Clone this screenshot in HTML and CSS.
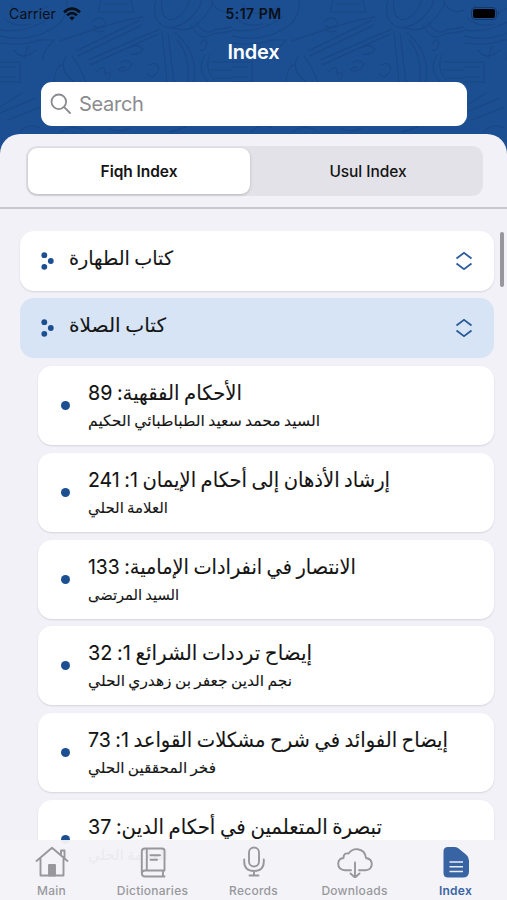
FILE: index.html
```html
<!DOCTYPE html>
<html lang="en">
<head>
<meta charset="utf-8">
<title>Index</title>
<link rel="stylesheet" href="styles.css">
</head>
<body>
<div class="app">
  <header class="header">
    <svg class="pattern" width="507" height="160" aria-hidden="true">
      <defs>
        <pattern id="doodle" width="232" height="160" patternUnits="userSpaceOnUse">
          <g fill="none" stroke="#184788" stroke-width="1.4" stroke-linecap="round" stroke-linejoin="round">
            <path d="M76 51 L140 20 M78 56 L142 25 M88 60 L160 29 M90 65 L158 34 M60 41 Q120 20 143 17"/>
            <path d="M102 -2 L98 12 H134 L130 -2 M105 4 H128"/>
            <path d="M156 0 Q150 22 168 28 Q184 27 195 13 Q204 3 200 -4 M162 0 Q160 18 171 20 Q184 17 190 0 M171 27 Q190 36 204 17 Q214 5 212 0"/>
            <path d="M162 31 L167 82 M168 33 L174 82 M174 32 Q198 50 194 82 M177 40 Q190 55 188 82"/>
            <path d="M191 25 Q200 43 212 34 L232 31 M196 22 Q205 37 214 30 L232 27 M205 55 Q196 70 208 82 M210 55 Q204 68 214 80"/>
            <path d="M0 36 Q34 44 60 23 Q70 10 66 -2 M0 43 Q24 46 40 40 L54 40 Q42 52 43 60 M0 30 Q28 34 52 16 M10 4 Q20 22 48 6"/>
            <path d="M92 22 Q100 14 106 22 Q102 30 94 26 Q92 34 104 31"/>
            <path d="M66 56 Q58 70 74 82 M72 56 Q80 66 86 82 M54 82 Q56 62 64 66 M96 72 Q106 62 105 74 Q114 70 108 80"/>
            <path d="M120 63 Q128 58 132 64 Q128 72 120 71 Q116 68 125 67 M129 48 Q138 43 143 49 Q138 56 131 54 M149 65 Q160 60 158 72 Q152 80 147 74 M200 44 Q206 36 207 44 Q205 52 200 50"/>
            <path d="M0 62 H20 V82 H0 M0 67 H16 M0 77 H16 M0 107 L22 93 M0 113 L36 98 M8 120 L40 107 M20 132 Q28 122 40 128"/>
            <path d="M212 62 H232 M212 70 H232 M215 78 H232 M216 105 L232 98 M212 116 L232 108 M60 132 Q72 124 84 130 M108 128 Q118 134 130 128 M170 132 L186 127"/>
            <path d="M212 2 Q220 16 232 10 M4 18 Q14 28 30 24 M28 46 L24 58 M14 50 Q22 62 36 50"/>
          </g>
        </pattern>
      </defs>
      <rect width="507" height="160" fill="url(#doodle)"/>
    </svg>
    <div class="status">
      <div class="carrier"><span>Carrier</span>
        <svg width="18" height="14" viewBox="0 0 18 14" fill="none" stroke="#0a0f18" stroke-width="2.6"><path d="M1 5.2 Q9 -2 17 5.2"/><path d="M4 8.3 Q9 4 14 8.3"/><path d="M6.2 10.6 Q9 8.2 11.8 10.6 L9 13.6Z" fill="#0a0f18" stroke="none"/></svg>
      </div>
      <div class="clock">5:17 PM</div>
      <svg class="battery" width="30" height="13" viewBox="0 0 30 13"><rect x=".5" y=".5" width="25" height="12" rx="3.5" fill="none" stroke="#143a6d"/><rect x="2" y="2" width="22" height="9" rx="2" fill="#000"/><path d="M27 4.5 Q29 6.5 27 8.5Z" fill="#143a6d"/></svg>
    </div>
    <h1 class="title">Index</h1>
    <div class="search">
      <svg width="22" height="22" viewBox="0 0 22 22" fill="none" stroke="#8b8b8f" stroke-width="1.8" stroke-linecap="round"><circle cx="8.8" cy="8.8" r="7.3"/><path d="M14.2 14.2 L20 20"/></svg>
      <span>Search</span>
    </div>
  </header>
  <main class="panel">
    <div class="segbar"><div class="seg"><div class="seg-item on">Fiqh Index</div><div class="seg-item">Usul Index</div></div></div>
    <div class="list">
      <div class="group">
        <svg class="dots" width="14" height="18" viewBox="0 0 14 18" fill="#1b4f91"><circle cx="4.3" cy="3.2" r="2.9"/><circle cx="10.8" cy="9" r="2.9"/><circle cx="4.3" cy="14.8" r="2.9"/></svg>
        <span class="group-name" dir="rtl" data-width="104">كتاب الطهارة</span>
        <svg class="chev" width="18" height="20" viewBox="0 0 18 20" fill="none" stroke="#2b5b99" stroke-width="1.8"><path d="M1.5 7.5 L9 1.8 L16.5 7.5 M1.5 12.5 L9 18.2 L16.5 12.5"/></svg>
      </div>
      <div class="group open">
        <svg class="dots" width="14" height="18" viewBox="0 0 14 18" fill="#1b4f91"><circle cx="4.3" cy="3.2" r="2.9"/><circle cx="10.8" cy="9" r="2.9"/><circle cx="4.3" cy="14.8" r="2.9"/></svg>
        <span class="group-name" dir="rtl" data-width="97">كتاب الصلاة</span>
        <svg class="chev" width="18" height="20" viewBox="0 0 18 20" fill="none" stroke="#2b5b99" stroke-width="1.8"><path d="M1.5 7.5 L9 1.8 L16.5 7.5 M1.5 12.5 L9 18.2 L16.5 12.5"/></svg>
      </div>
      <div class="books">
        <div class="book"><i></i><div class="text"><div class="name" dir="rtl" data-width="154">الأحكام الفقهية: 89</div><div class="author" dir="rtl" data-width="232">السيد محمد سعيد الطباطبائي الحكيم</div></div></div>
        <div class="book"><i></i><div class="text"><div class="name" dir="rtl" data-width="302">إرشاد الأذهان إلى أحكام الإيمان 1: 241</div><div class="author" dir="rtl" data-width="80">العلامة الحلي</div></div></div>
        <div class="book"><i></i><div class="text"><div class="name" dir="rtl" data-width="268">الانتصار في انفرادات الإمامية: 133</div><div class="author" dir="rtl" data-width="91">السيد المرتضى</div></div></div>
        <div class="book"><i></i><div class="text"><div class="name" dir="rtl" data-width="224">إيضاح ترددات الشرائع 1: 32</div><div class="author" dir="rtl" data-width="204">نجم الدين جعفر بن زهدري الحلي</div></div></div>
        <div class="book"><i></i><div class="text"><div class="name" dir="rtl" data-width="360">إيضاح الفوائد في شرح مشكلات القواعد 1: 73</div><div class="author" dir="rtl" data-width="128">فخر المحققين الحلي</div></div></div>
        <div class="book"><i></i><div class="text"><div class="name" dir="rtl" data-width="294">تبصرة المتعلمين في أحكام الدين: 37</div><div class="author" dir="rtl" data-width="80">العلامة الحلي</div></div></div>
      </div>
    </div>
    <div class="scroll"></div>
  </main>
  <nav class="tabs">
    <div class="tab"><svg width="34" height="32" viewBox="0 0 34 32" fill="none" stroke="#98989c" stroke-width="1.9" stroke-linecap="round" stroke-linejoin="round"><path d="M1.5 15 L17 1.8 L32.5 15 M5.5 12.5 V29.5 H28.5 V12.5 M26 9 V4.5 H29.5 V12"/><path d="M14 29.5 V19 H20 V29.5Z" fill="#98989c"/></svg><span>Main</span></div>
    <div class="tab"><svg width="34" height="32" viewBox="0 0 34 32" fill="none" stroke="#98989c" stroke-width="1.9" stroke-linecap="round" stroke-linejoin="round"><path d="M28.5 24.5 V5 Q28.5 2.5 26 2.5 H9 Q5.8 2.5 5.8 5.5 V27 Q5.8 30.5 9 30.5 H28.5 M28.5 24.5 H9 Q6 24.5 5.8 27.5 M27 25 V30 M10.8 3 V24 M14.5 9.2 H24 M14.5 13.8 H21"/></svg><span>Dictionaries</span></div>
    <div class="tab"><svg width="34" height="32" viewBox="0 0 34 32" fill="none" stroke="#98989c" stroke-width="1.9" stroke-linecap="round"><rect x="12" y="1.5" width="10" height="19" rx="5"/><path d="M7.2 13.5 V15.5 Q7.2 25 17 25 Q26.8 25 26.8 15.5 V13.5 M17 25 V29.5 M12.5 29.5 H21.5"/></svg><span>Records</span></div>
    <div class="tab"><svg width="36" height="32" viewBox="0 0 36 32" fill="none" stroke="#98989c" stroke-width="1.9" stroke-linecap="round" stroke-linejoin="round"><path d="M14 24.2 H7.5 Q1.2 23.5 1.2 17.5 Q1.5 12.5 6.5 12 Q6.5 6.5 11.5 7.5 Q15 2.8 20.5 3.2 Q28 4 29 12 Q34.8 13 34.8 18 Q34.5 24 28.5 24.2 H22 M18 16.5 V31 M13.5 27.5 L18 31.5 L22.5 27.5"/></svg><span>Downloads</span></div>
    <div class="tab active"><svg width="34" height="32" viewBox="0 0 34 32"><path d="M9 1 H16 Q18 1 20 2.7 L27.5 9 Q30 11.2 30 14.5 V25.5 Q30 31.5 24 31.5 H9 Q4.5 31.5 4.5 27 V5.5 Q4.5 1 9 1Z" fill="#3864a3"/><path d="M10.5 16 H24 M10.5 20.7 H24 M10.5 25.4 H24" stroke="#e8eef8" stroke-width="1.5"/></svg><span>Index</span></div>
  </nav>
</div>
<script src="fit.js"></script>
</body>
</html>
```
FILE: fit.js
```js
document.querySelectorAll('[data-width]').forEach(function (el) {
  var natural = el.getBoundingClientRect().width;
  el.style.transform = 'scaleX(' + (el.dataset.width / natural).toFixed(4) + ')';
});
```
FILE: styles.css
```css
* { box-sizing: border-box; }
body { margin: 0; font-family: Inter, "DejaVu Sans", sans-serif; color: #141414; }
.app { position: relative; width: 507px; height: 900px; overflow: hidden; background: #1c4f91; display: flex; flex-direction: column; }
.header { position: relative; height: 134px; flex: none; }
.pattern { position: absolute; left: 0; top: 0; }
.status { position: relative; height: 27px; display: grid; grid-template-columns: 1fr auto 1fr; align-items: center; padding: 0 6px 0 9px; font-size: 14px; color: #0a0f18; }
.carrier { display: flex; align-items: center; gap: 7px; letter-spacing: .15px; }
.clock { font-weight: 600; font-size: 14px; letter-spacing: .5px; margin-right: 3px; }
.battery { justify-self: end; }
.title { position: relative; margin: 12px 0 0; text-align: center; font-size: 20px; line-height: 26px; font-weight: 600; color: #fff; letter-spacing: -.2px; }
.search { position: relative; margin: 17px 40px 0 41px; height: 44px; border-radius: 11px; background: #fff; display: flex; align-items: center; gap: 7px; padding-left: 9px; font-size: 20px; letter-spacing: -.3px; color: #8b8b8f; }
.panel { position: relative; flex: 1; background: #f2f1f8; border-radius: 20px 20px 0 0; overflow: hidden; }
.segbar { height: 75px; padding: 12px 24px 0 26px; border-bottom: 2px solid #c9c8ce; }
.seg { height: 50px; border-radius: 11px; background: #e3e2e8; display: grid; grid-template-columns: 226px 1fr; padding: 2px; }
.seg-item { display: flex; align-items: center; justify-content: center; font-size: 15.5px; font-weight: 500; letter-spacing: -.05px; padding-left: 1px; }
.seg-item.on { margin-right: 4px; padding-left: 0; background: #fff; border-radius: 9px; font-weight: 600; box-shadow: 0 1px 3px rgba(0,0,0,.2); }
.list { padding: 22px 13px 0 20px; display: flex; flex-direction: column; gap: 7.5px; }
.group { height: 60px; border-radius: 14px; background: #fff; box-shadow: 0 1px 2px rgba(0,0,0,.12); display: flex; align-items: center; padding: 0 21px 0 20px; }
.group.open { margin-top: -.5px; background: #d7e4f6; box-shadow: none; }
.group-name { margin: -6px auto 0 15px; font-size: 19.5px; }
.group-name, .name, .author { transform-origin: left center; word-spacing: -1px; -webkit-text-stroke: .1px; }
.books { margin: .5px 0 0 18px; display: flex; flex-direction: column; gap: 7.8px; }
.book { height: 79px; border-radius: 14px; background: #fff; box-shadow: 0 1px 2px rgba(0,0,0,.12); display: flex; align-items: center; padding-left: 23px; }
.book i { width: 9px; height: 9px; border-radius: 50%; background: #1b4f91; }
.text { margin-left: 18px; display: flex; flex-direction: column; align-items: flex-start; white-space: nowrap; }
.name { font-size: 20.5px; line-height: 30px; }
.author { font-size: 15px; line-height: 25px; }
.scroll { position: absolute; right: 3px; top: 98px; width: 4px; height: 55px; border-radius: 2px; background: #98979d; }
.tabs { position: absolute; left: 0; right: 0; bottom: 0; height: 60px; background: rgba(243,242,248,.96); display: grid; grid-template-columns: repeat(5, 101px); justify-content: center; padding-top: 6px; }
.tab { display: flex; flex-direction: column; align-items: center; gap: 5px; font-size: 12px; line-height: 15px; font-weight: 500; letter-spacing: .25px; color: #98989c; }
.tab.active { color: #3864a3; font-weight: 600; }
```
